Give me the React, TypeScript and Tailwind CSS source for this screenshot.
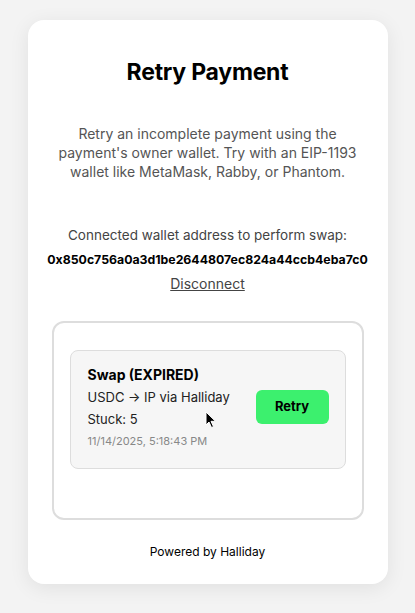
import React from "react";

export default function App() {
  return (
    <div className="min-h-[613px] w-full bg-[#f3f3f3] pt-5 font-['Inter',sans-serif] text-black">
      <div className="mx-auto w-[360px] rounded-2xl bg-white px-6 pt-[38px] pb-[24px] shadow-[0_4px_20px_rgba(0,0,0,0.08)]">
        <h1 className="text-center text-[23px] leading-7 font-bold tracking-[-0.01em]">Retry Payment</h1>

        <p className="mx-auto mt-[38px] w-[300px] text-center text-[14px] leading-[19px] text-[#555]">
          Retry an incomplete payment using the payment's owner wallet. Try with an EIP-1193 wallet like MetaMask, Rabby, or Phantom.
        </p>

        <div className="mt-[44px] flex flex-col items-center">
          <div className="text-[13.5px] leading-5 text-[#444]">Connected wallet address to perform swap:</div>
          <div className="mt-[5px] text-[12.3px] leading-5 font-bold whitespace-nowrap">0x850c756a0a3d1be2644807ec824a44ccb4eba7c0</div>
          <button className="mt-[4px] text-[14px] leading-5 text-[#444] underline">Disconnect</button>
        </div>

        <div className="mt-[27px] h-[199px] rounded-xl border-2 border-[#ddd] px-[16px] pt-[27px]">
          <div className="relative flex items-center justify-between rounded-lg border border-[#ddd] bg-[#f6f6f6] pl-[17px] pr-4 pt-[13px] pb-[19px]">
            <div className="flex flex-col">
              <div className="text-[14px] leading-[22px] font-bold">Swap (EXPIRED)</div>
              <div className="text-[13px] leading-[22px] text-[#222]">USDC → IP via Halliday</div>
              <div className="text-[13px] leading-[22px] text-[#222]">Stuck: 5</div>
              <div className="mt-[3px] text-[11px] leading-4 text-[#888]">11/14/2025, 5:18:43 PM</div>
            </div>
            <button className="mt-[1px] h-[34px] w-[73px] rounded-md bg-[#3cf06e] text-[13px] font-bold">Retry</button>
            <svg className="absolute left-[134px] top-[60px]" width="12" height="18" viewBox="0 0 12 18">
              <path d="M1 1 L1 14 L4 11 L6.5 16.5 L8.5 15.6 L6 10.3 L10.5 10.3 Z" fill="#000" stroke="#fff" strokeWidth="1" strokeLinejoin="round" />
            </svg>
          </div>
        </div>

        <div className="mt-[24px] text-center text-[12px] leading-4">Powered by Halliday</div>
      </div>
    </div>
  );
}
